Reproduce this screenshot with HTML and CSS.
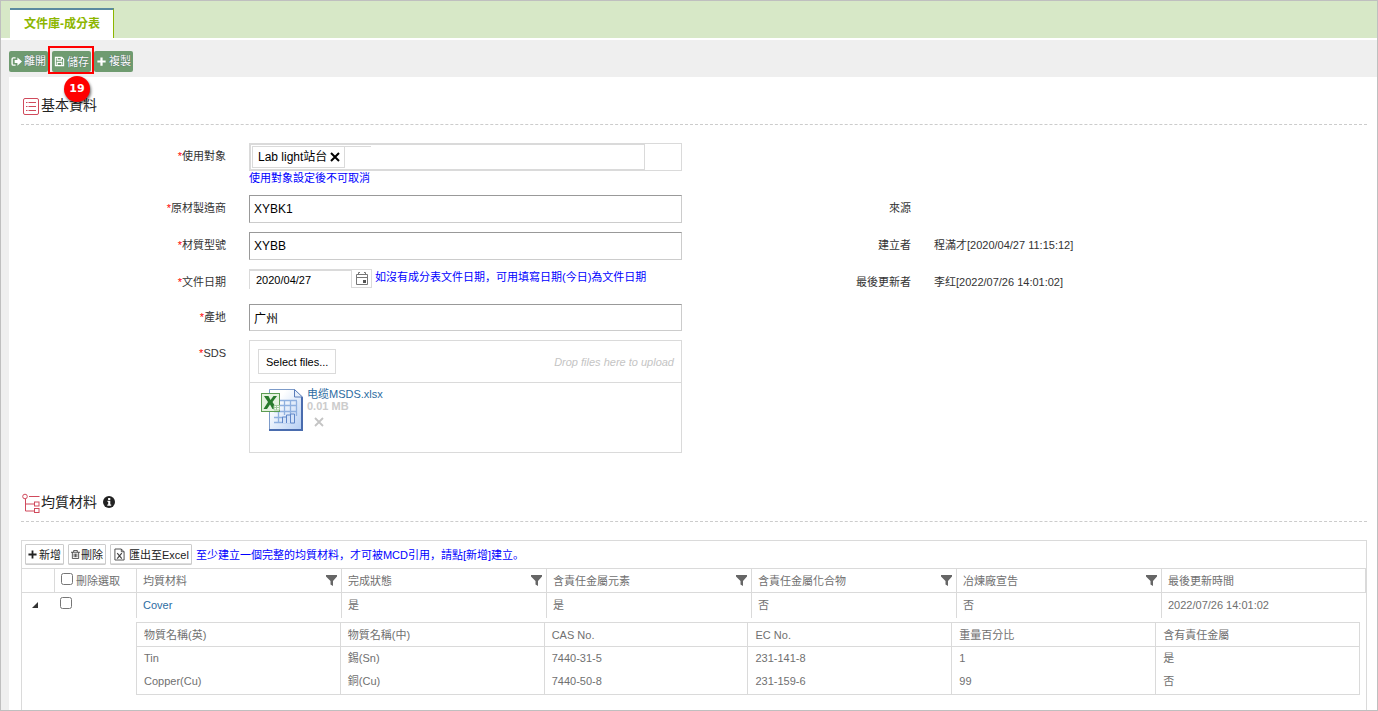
FILE: index.html
```html
<!DOCTYPE html>
<html lang="zh-Hant">
<head>
<meta charset="utf-8">
<title>文件庫-成分表</title>
<link rel="stylesheet" href="styles.css">
</head>
<body>
<div class="page">
  <header class="tabs"><a class="tab" href="#">文件庫-成分表</a></header>

  <div class="actions">
    <button class="action" type="button"><svg class="ico" viewBox="0 0 12 12"><path d="M5 2H2.500Q1.200 2 1.200 3.300v5.400Q1.200 10 2.500 10H5" fill="none" stroke="currentColor" stroke-width="1.500"/><path d="M4 4.400h3V1.500l5 4.500-5 4.500V7.600H4z" fill="currentColor"/></svg>離開</button>
    <div class="marked">
      <button class="action" type="button"><svg class="ico" viewBox="0 0 12 12"><path d="M1.500 1.500h7l2 2v7h-9zM3.500 1.500v3h4.500v-3M3.500 10.500V7h5v3.500" fill="none" stroke="currentColor" stroke-width="1.200"/></svg>儲存</button>
      <span class="step">19</span>
    </div>
    <button class="action" type="button"><svg class="ico" viewBox="0 0 12 12"><path d="M6 1.500v9M1.500 6h9" stroke="currentColor" stroke-width="2.400"/></svg>複製</button>
  </div>

  <main class="content">
    <h2 class="title"><svg class="title-ico" viewBox="0 0 18 20"><rect x="1.500" y="2.500" width="15" height="16" rx="1.500"/><path d="M4 6.500h1.500M4 10.500h1.500M4 14.500h1.500M6.500 6.500H14M6.500 10.500H14M6.500 14.500H14"/></svg>基本資料</h2>

    <form class="form">
      <label class="label" for="target"><i>*</i>使用對象</label>
      <div class="field">
        <div class="multi">
          <div class="multi-main">
            <span class="tag">Lab light站台<button class="tag-x" type="button" aria-label="移除"><svg viewBox="0 0 10 10"><path d="M1 1l8 8M9 1l-8 8" stroke="currentColor" stroke-width="2"/></svg></button></span>
            <input class="multi-input" id="target" type="text">
          </div>
        </div>
        <p class="hint">使用對象設定後不可取消</p>
      </div>

      <label class="label row2" for="maker"><i>*</i>原材製造商</label>
      <input class="text" id="maker" type="text" value="XYBK1">
      <span class="label">來源</span><span></span>

      <label class="label" for="model"><i>*</i>材質型號</label>
      <input class="text" id="model" type="text" value="XYBB">
      <span class="label">建立者</span><span class="value">程滿才[2020/04/27 11:15:12]</span>

      <label class="label" for="date"><i>*</i>文件日期</label>
      <div class="date-row">
        <input class="date" id="date" type="text" value="2020/04/27"><button class="cal" type="button" aria-label="選擇日期"><svg viewBox="0 0 14 14"><path d="M1.500 2.500v10h11v-10zM1.500 5.500h11M3.500 2.500v-2h1.500M10.500 2.500v-2H9" fill="none" stroke="#777"/><path d="M8 8h3v3H8z" fill="#555"/></svg></button>
        <span class="date-hint" lang="zh-Hans">如沒有成分表文件日期，可用填寫日期(今日)為文件日期</span>
      </div>
      <span class="label">最後更新者</span><span class="value">李红[2022/07/26 14:01:02]</span>

      <label class="label row2" for="origin"><i>*</i>產地</label>
      <input class="text origin" id="origin" type="text" value="广州">

      <span class="label row2"><i>*</i>SDS</span>
      <div class="upload">
        <div class="drop"><button class="select" type="button">Select files...</button><em>Drop files here to upload</em></div>
        <div class="file">
          <svg class="file-ico" viewBox="0 0 44 44">
            <defs><linearGradient id="sheet" x1="0" y1="0" x2="1" y2="1"><stop offset="0.250" stop-color="#fff"/><stop offset="1" stop-color="#b3cdf3"/></linearGradient></defs>
            <path d="M9.500 1.500h25l8 8v32h-33z" fill="url(#sheet)" stroke="#7d9bc9"/>
            <path d="M42 9v33H9" fill="none" stroke="#4a6cae" stroke-width="2"/>
            <path d="M34.500 1.500v7.500h8z" fill="#e6effb" stroke="#5b7dba"/>
            <path d="M17 12.500h20M17 17.500h20M14 23.500h23M14 29.500h9M14 34.500h21M18.500 13v21M24.500 13v14M30.500 13v13M36.500 13v15" stroke="#8fb0df" fill="none" stroke-width="1.300"/>
            <path d="M22.500 35v-6h4v6M26.500 35v-8h4v8M30.500 35v-9h4v9z" fill="#d3e2f8" stroke="#5f86c8"/>
            <rect x="1.500" y="5.500" width="18" height="18" fill="#e5f2df" stroke="#5c9c52"/>
            <path d="M4 8h4.500l2 4 3-4H17l-4.500 6 4.500 7h-4.500l-2.500-4.500L7 21H3.500l4.500-7z" fill="#287a2c"/>
            <path d="M14 17.500h5.500V22H14zM14 19.500h5.500M16.500 17.500V22" fill="#f6fbf4" stroke="#a5caa0"/>
          </svg>
          <div class="file-info"><a class="link" href="#">电缆MSDS.xlsx</a><b>0.01 MB</b><button class="remove" type="button" aria-label="移除檔案"><svg viewBox="0 0 10 10"><path d="M1 1l8 8M9 1l-8 8" stroke="currentColor" stroke-width="1.800"/></svg></button></div>
        </div>
      </div>
    </form>

    <h2 class="title"><svg class="title-ico" viewBox="0 0 18 20"><circle cx="3" cy="3.500" r="2.300"/><path d="M7 3.500h10.500M3.500 6v12H12M3.500 11H12"/><rect x="12.500" y="9" width="4.500" height="4"/><rect x="12.500" y="15.500" width="4.500" height="4"/></svg>均質材料<svg class="info" viewBox="0 0 12 12"><circle cx="6" cy="6" r="6" fill="#222"/><path d="M4.500 4.800h2.800v3.700h.9v1.300H4.300V8.500h.9V6h-.7zM5.100 2h2.200v1.900H5.100z" fill="#fff"/></svg></h2>

    <section class="grid">
      <div class="grid-bar">
        <button class="tool" type="button"><svg class="tool-ico" viewBox="0 0 10 10"><path d="M5 .5v9M.5 5h9" stroke="#222" stroke-width="2"/></svg>新增</button>
        <button class="tool trash" type="button"><svg class="tool-ico" viewBox="0 0 10 10"><path d="M0 2.500h10M3 2.500V.5h4v2M1.500 2.500v7h7v-7M3.500 4v4M5 4v4M6.500 4v4" fill="none" stroke="#333" stroke-width=".9"/></svg>刪除</button>
        <button class="tool excel" type="button"><svg class="excel-ico" viewBox="0 0 12 14"><path d="M1 1h7l3 3v9H1zM8 1v3h3" fill="#fff" stroke="#444"/><path d="M3.500 5.500l5 6M8.500 5.500l-5 6" stroke="#444" stroke-width="1.300"/></svg>匯出至Excel</button>
        <span class="grid-hint" lang="zh-Hans">至少建立一個完整的均質材料，才可被MCD引用，請點[新增]建立。</span>
      </div>
      <table class="table">
        <colgroup><col class="c-arrow"><col class="c-check"><col><col><col><col><col><col></colgroup>
        <thead>
          <tr>
            <th></th>
            <th><label class="check-all"><input type="checkbox">刪除選取</label></th>
            <th><div class="head">均質材料<svg class="filter" viewBox="0 0 11 11"><path d="M0 0h11v1.500L7 6v5L4.500 9.500V6L0 1.500z"/></svg></div></th>
            <th><div class="head">完成狀態<svg class="filter" viewBox="0 0 11 11"><path d="M0 0h11v1.500L7 6v5L4.500 9.500V6L0 1.500z"/></svg></div></th>
            <th><div class="head">含責任金屬元素<svg class="filter" viewBox="0 0 11 11"><path d="M0 0h11v1.500L7 6v5L4.500 9.500V6L0 1.500z"/></svg></div></th>
            <th><div class="head">含責任金屬化合物<svg class="filter" viewBox="0 0 11 11"><path d="M0 0h11v1.500L7 6v5L4.500 9.500V6L0 1.500z"/></svg></div></th>
            <th><div class="head">冶煉廠宣告<svg class="filter" viewBox="0 0 11 11"><path d="M0 0h11v1.500L7 6v5L4.500 9.500V6L0 1.500z"/></svg></div></th>
            <th>最後更新時間</th>
          </tr>
        </thead>
        <tbody>
          <tr class="data">
            <td class="arrow"><svg viewBox="0 0 6 6"><path d="M6 0v6H0z" fill="#333"/></svg></td>
            <td class="pick"><input type="checkbox" aria-label="選取 Cover"></td>
            <td><a class="link" href="#">Cover</a></td><td>是</td><td>是</td><td>否</td><td>否</td><td>2022/07/26 14:01:02</td>
          </tr>
          <tr>
            <td></td><td></td>
            <td class="nest" colspan="6">
              <table class="detail">
                <thead><tr><th>物質名稱(英)</th><th>物質名稱(中)</th><th>CAS No.</th><th>EC No.</th><th>重量百分比</th><th>含有責任金屬</th></tr></thead>
                <tbody>
                  <tr><td>Tin</td><td>錫(Sn)</td><td>7440-31-5</td><td>231-141-8</td><td>1</td><td>是</td></tr>
                  <tr><td>Copper(Cu)</td><td>銅(Cu)</td><td>7440-50-8</td><td>231-159-6</td><td>99</td><td>否</td></tr>
                </tbody>
              </table>
            </td>
          </tr>
        </tbody>
      </table>
    </section>
  </main>
</div>
</body>
</html>
```
FILE: styles.css
```css
* { box-sizing: border-box; }
body { margin: 0; }
body, button, input {
  font-family: "Liberation Sans", "Noto Sans CJK SC", sans-serif;
  font-size: 11px;
  line-height: 16px;
}
svg { display: block; flex: none; }
button { margin: 0; padding: 0; cursor: pointer; }
input { margin: 0; }
p { margin: 0; }
a { text-decoration: none; }

.page {
  display: flex;
  flex-direction: column;
  min-height: 100vh;
  border: 1px solid #bfbfbf;
  background: #efefef;
  color: #333;
}
.tabs {
  display: flex;
  height: 39px;
  padding: 7px 9px 0;
  border-bottom: 2px solid #fff;
  background: #d7e8c7;
}
.tab {
  padding: 6px 13px 0 14px;
  border-top: 2px solid #5a8aa0;
  border-right: 1px solid #8db600;
  background: #fff;
  color: #8db600;
  font-size: 12px;
  font-weight: bold;
}

.actions {
  display: flex;
  align-items: center;
  height: 37px;
  padding: 5px 8px 0;
}
.action {
  display: flex;
  align-items: center;
  gap: 2px;
  height: 21px;
  padding: 0 2px;
  border: 0;
  border-radius: 2px;
  background: #6f9b70;
  color: #fff;
  text-shadow: 0 0 1px #345;
}
.ico { width: 11px; height: 11px; }
.marked {
  position: relative;
  padding: 3px 1px 0 2px;
  border: 2px solid #f00;
  margin-bottom: 2px;
}
.step {
  position: absolute;
  top: 28px;
  left: 14px;
  width: 26px;
  height: 26px;
  border-radius: 50%;
  background: #f00;
  box-shadow: 1px 2px 3px rgba(0, 0, 0, .6);
  color: #fff;
  font: bold 11px/26px "DejaVu Sans", sans-serif;
  text-align: center;
}

.content {
  flex: 1;
  display: flex;
  flex-direction: column;
  margin-left: 8px;
  padding: 18px 10px 0 12px;
  background: #fff;
}
.title {
  display: flex;
  align-items: center;
  height: 30px;
  margin: 0;
  padding-bottom: 9px;
  border-bottom: 1px dashed #ccc;
  color: #222;
  font-size: 14px;
  font-weight: normal;
}
.title-ico {
  width: 18px;
  height: 20px;
  margin: 2px 1px 0;
  fill: none;
  stroke: #d04a5c;
}
.info { width: 12px; height: 12px; margin-left: 6px; }

.form {
  display: grid;
  grid-template-columns: 205fr 433fr 206fr 433fr;
  gap: 9px 23px;
  align-items: start;
  padding: 18px 0 39px;
}
.label { line-height: 26px; text-align: right; }
.label i { color: #f00; font-style: normal; }
.value { line-height: 26px; }
.row2 { grid-column: 1; }
.multi {
  height: 28px;
  padding-right: 36px;
  border: 1px solid #dadada;
}
.multi-main {
  display: flex;
  height: 26px;
  padding: 1px;
  border: 1px solid #dadada;
}
.tag {
  display: flex;
  align-items: center;
  gap: 3px;
  height: 22px;
  padding: 0 4px 0 5px;
  border: 1px solid #dadada;
  color: #000;
  font-size: 12px;
}
.tag-x, .remove {
  width: 10px;
  height: 10px;
  border: 0;
  background: none;
  color: #000;
}
.multi-input {
  width: 26px;
  height: 22px;
  padding: 0;
  border: 0;
  border-top: 1px solid #dadada;
}
.hint { color: #00f; line-height: 15px; }
.text {
  width: 100%;
  height: 28px;
  padding: 0 4px;
  border: 1px solid #ccc;
  border-top-color: #999;
  border-left-color: #999;
  color: #000;
  font-size: 12px;
}
.origin { height: 27px; }
.date-row { display: flex; height: 26px; }
.date {
  width: 102px;
  height: 20px;
  padding: 0 6px;
  border: 0;
  border-top: 2px solid #dadada;
  border-left: 1px solid #dadada;
  color: #000;
}
.cal {
  display: flex;
  align-items: center;
  justify-content: center;
  width: 21px;
  height: 19px;
  border: 1px solid #dadada;
  background: #fff;
}
.cal svg { width: 14px; height: 14px; }
.date-hint { margin-left: 3px; color: #00f; white-space: nowrap; }
.upload {
  height: 113px;
  border: 1px solid #dadada;
}
.drop {
  display: flex;
  align-items: center;
  justify-content: space-between;
  height: 42px;
  padding: 0 7px 0 8px;
  border-bottom: 1px solid #dadada;
  color: #c4c4c4;
}
.select {
  height: 25px;
  padding: 0 7px;
  border: 1px solid #dadada;
  background: #fff;
  color: #000;
}
.file { display: flex; gap: 3px; padding: 5px 10px; }
.file-ico { width: 44px; height: 44px; }
.file-info { display: flex; flex-direction: column; line-height: 12px; }
.file-info b { color: #ccc; }
.remove { margin: 5px 7px; color: #c4c4c4; }
.link { color: #2d6ca2; }

.grid {
  flex: 1;
  margin-top: 18px;
  border: 1px solid #dadada;
  border-bottom: 0;
  color: #707070;
}
.grid-bar {
  display: flex;
  align-items: center;
  gap: 4px;
  height: 27px;
  padding: 0 3px;
}
.tool {
  display: flex;
  align-items: center;
  gap: 2px;
  height: 21px;
  padding: 0 2px;
  border: 1px solid #ccc;
  border-radius: 1px;
  background: #fff;
  box-shadow: inset 0 -1px 0 #ddd;
  color: #222;
}
.tool-ico { width: 9px; height: 9px; }
.trash { gap: 1px; }
.excel { gap: 4px; padding-left: 3px; }
.excel-ico { width: 11px; height: 13px; }
.grid-hint { color: #00f; }

.table, .detail {
  width: 100%;
  border-spacing: 0;
  table-layout: fixed;
}
.c-arrow { width: 32px; }
.c-check { width: 82px; }
th, td {
  padding: 0 6px;
  font-weight: normal;
  text-align: left;
}
.table > thead > tr > th {
  height: 25px;
  border: 1px solid #dadada;
  border-right: 0;
}
.table > thead > tr > th:first-child { border-left: 0; }
.table > thead > tr > th:last-child { border-right: 1px solid #dadada; }
.head { display: flex; align-items: center; justify-content: space-between; }
.filter { width: 11px; height: 11px; margin-right: -2px; fill: #666; }
.check-all { display: flex; gap: 3px; }
.check-all input { width: 12px; height: 12px; }
.data td {
  height: 25px;
  padding: 0 6px 1px;
  border-left: 1px solid #dadada;
}
.data td.arrow, .data td.pick { border-left: 0; }
.data td.arrow { padding-left: 10px; }
.arrow svg { width: 6px; height: 6px; }
.pick input { display: block; width: 12px; height: 12px; margin-bottom: 4px; }
.table > tbody > tr > .nest { padding: 4px 6px 0 0; }
.detail { border: 1px solid #dadada; border-left: 0; }
.detail th, .detail td {
  height: 23px;
  padding-left: 7px;
  border-left: 1px solid #dadada;
}
.detail td { padding-bottom: 2px; }
.detail th { height: 24px; border-bottom: 1px solid #dadada; }
.detail tr:last-child td { height: 24px; }
```
